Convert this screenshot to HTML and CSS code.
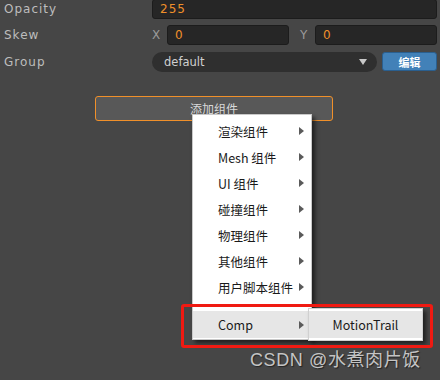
FILE: index.html
```html
<!DOCTYPE html>
<html lang="zh">
<head>
  <meta charset="UTF-8">
  <title>Inspector - 添加组件</title>
  <link rel="stylesheet" href="styles.css">
</head>
<body>
  <div class="props">
    <div class="prop">
      <div class="label">Opacity</div>
      <div class="field"><div class="input num">255</div></div>
    </div>
    <div class="prop">
      <div class="label">Skew</div>
      <div class="field pair">
        <div class="axis"><span class="axis-name">X</span><div class="input num">0</div></div>
        <div class="axis"><span class="axis-name">Y</span><div class="input num">0</div></div>
      </div>
    </div>
    <div class="prop">
      <div class="label">Group</div>
      <div class="field group">
        <div class="select">default<span class="caret"></span></div>
        <button class="edit-btn">编辑</button>
      </div>
    </div>
  </div>

  <div class="add-row">
    <button class="add-btn">添加组件</button>
  </div>

  <!-- context menu -->
  <div class="menu">
    <div class="item">渲染组件<span class="arrow"></span></div>
    <div class="item">Mesh 组件<span class="arrow"></span></div>
    <div class="item">UI 组件<span class="arrow"></span></div>
    <div class="item">碰撞组件<span class="arrow"></span></div>
    <div class="item">物理组件<span class="arrow"></span></div>
    <div class="item">其他组件<span class="arrow"></span></div>
    <div class="item">用户脚本组件<span class="arrow"></span></div>
    <div class="sep"></div>
    <div class="item active">Comp<span class="arrow"></span></div>
  </div>
  <div class="submenu">
    <div class="sub-item">MotionTrail</div>
  </div>

  <div class="highlight"></div>
  <div class="watermark">CSDN @水煮肉片饭</div>
</body>
</html>
```

FILE: styles.css
```css
body {
  margin: 0;
  width: 440px;
  height: 380px;
  overflow: hidden;
  background: #464646;
  font-family: 'DejaVu Sans', 'Noto Sans CJK SC', sans-serif;
  font-size: 12px;
  color: #bdbdbd;
  position: relative;
}
.props {
  margin-top: -1px;
  padding: 0 3px 0 4px;
  display: flex;
  flex-direction: column;
  gap: 6px;
}
.prop {
  display: flex;
  align-items: center;
  height: 20px;
}
.prop + .prop + .prop {
  margin-top: 1px;
}
.label {
  width: 148px;
  letter-spacing: 1px;
}
.field {
  flex: 1;
  display: flex;
  height: 20px;
}
.input {
  flex: 1;
  height: 18px;
  line-height: 18px;
  background: #262626;
  border: 1px solid #1c1c1c;
  border-radius: 3px;
  padding-left: 7px;
}
.num {
  color: #f0902a;
  letter-spacing: 1px;
}
.pair {
  display: grid;
  grid-template-columns: 1fr 1fr;
  gap: 11px;
}
.axis {
  display: flex;
  align-items: center;
}
.axis-name {
  width: 15px;
  color: #9a9a9a;
}
.group {
  gap: 5px;
}
.select {
  flex: 1;
  display: flex;
  align-items: center;
  background: #2f2f2f;
  border-radius: 10px;
  padding: 0 10px 0 12px;
  color: #d0d0d0;
  font-size: 11.5px;
}
.caret {
  margin-left: auto;
  width: 0;
  height: 0;
  border-left: 4px solid transparent;
  border-right: 4px solid transparent;
  border-top: 6px solid #c8c8c8;
}
.edit-btn {
  width: 55px;
  height: 19px;
  background: #4281b8;
  border: 1px solid #2a5f8f;
  border-radius: 3px;
  color: #fff;
  font-family: 'Noto Sans CJK SC', sans-serif;
  font-weight: bold;
  font-size: 11px;
  padding: 0;
}
.add-row {
  margin-top: 24px;
  padding-left: 95px;
}
.add-btn {
  width: 238px;
  height: 25px;
  background: #585858;
  border: 1px solid #f0902a;
  border-radius: 3px;
  color: #d8d8d8;
  font-family: 'Noto Sans CJK SC', sans-serif;
  font-size: 12px;
  padding: 0;
}

/* popup menu */
.menu {
  position: absolute;
  left: 192px;
  top: 114px;
  width: 118px;
  padding: 3px 0 1px 0;
  background: #fff;
  border: 1px solid #c9c9c9;
  box-shadow: 3px 3px 4px rgba(0, 0, 0, 0.55);
  font-family: 'Noto Sans CJK SC', sans-serif;
  font-size: 12.5px;
  color: #1a1a1a;
}
.item {
  height: 26px;
  display: flex;
  align-items: center;
  padding-left: 25px;
  position: relative;
}
.item.active {
  height: 27px;
  background: #e6e6e6;
}
.sep {
  height: 11px;
}
.arrow {
  position: absolute;
  left: 106px;
  top: 50%;
  margin-top: -4px;
  width: 0;
  height: 0;
  border-top: 4px solid transparent;
  border-bottom: 4px solid transparent;
  border-left: 5px solid #5a5a5a;
}
.submenu {
  position: absolute;
  left: 308px;
  top: 308px;
  width: 113px;
  padding: 2px 0;
  background: #fff;
  border: 1px solid #d0d0d0;
  box-shadow: 3px 3px 4px rgba(0, 0, 0, 0.55);
  font-family: 'Noto Sans CJK SC', sans-serif;
  font-size: 12.5px;
  color: #1a1a1a;
}
.sub-item {
  height: 27px;
  line-height: 27px;
  background: #e6e6e6;
  text-align: center;
}
.highlight {
  position: absolute;
  left: 181px;
  top: 304px;
  width: 246px;
  height: 38px;
  border: 3px solid #f01a12;
  border-radius: 3px;
}
.watermark {
  position: absolute;
  left: 250px;
  top: 345px;
  font-family: 'Liberation Sans', 'Noto Sans CJK SC', sans-serif;
  font-size: 18px;
  letter-spacing: 0.6px;
  color: #c4c4c4;
  text-shadow: 1px 1px 1px rgba(0, 0, 0, 0.5);
}
```
